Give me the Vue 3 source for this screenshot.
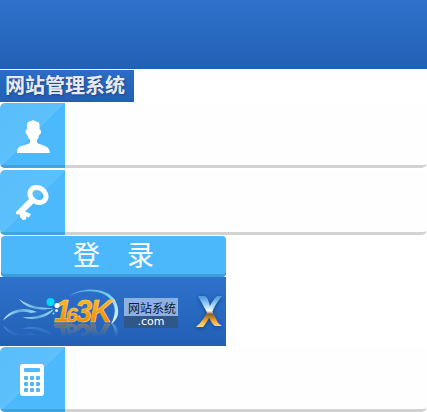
<script setup>
import { ref } from 'vue'

const username = ref('')
const password = ref('')
const code = ref('')
const dots = [0, 1, 2].flatMap((r) => [0, 1, 2].map((c) => ({ x: 24 + c * 6, y: 29 + r * 6 })))
</script>

<template>
  <div class="page">
    <header class="banner"></header>
    <form class="login" @submit.prevent>
      <h1 class="title">网站管理系统</h1>

      <div class="field">
        <label class="tile" for="username" aria-label="用户名">
          <svg viewBox="0 0 65 65" aria-hidden="true">
            <path fill="#fff" d="M28 19L31 18L33 17L36 18.500L39 19.500Q40 22 39.500 26Q41.500 27 41 30L39 32.500Q38.500 35.500 37 37V39.500Q38 41 41 41.500L46 43.500Q49.500 45 50 50H17Q17 45 20 43.500L26 41.500Q29.500 41 30 39.500V37Q28 35 27.500 32.500Q25 30.500 25.500 27.500L27 26Q26 22 28 19Z" />
          </svg>
        </label>
        <input id="username" v-model="username" class="entry" type="text" autocomplete="username" />
      </div>

      <div class="field">
        <label class="tile" for="password" aria-label="密码">
          <svg viewBox="0 0 65 65" aria-hidden="true">
            <ellipse cx="38" cy="25" rx="8.500" ry="7" transform="rotate(35 38 25)" fill="none" stroke="#fff" stroke-width="5" />
            <path fill="#fff" d="M29 29L34 33L25 41.500L31 44L29 47.500L26.500 46.500L26 49.500L23 50L20 47V44.500L16 44V42Z" />
          </svg>
        </label>
        <input id="password" v-model="password" class="entry" type="password" autocomplete="current-password" />
      </div>

      <button class="submit" type="submit">登　录</button>

      <div class="brand">
        <svg class="logo" viewBox="0 0 226 69" aria-label="163K 网站系统 .com">
          <defs>
            <linearGradient id="wing" x1="0" y1="0" x2="1" y2="0">
              <stop offset="0" stop-color="#c5e6fa" />
              <stop offset="0.5" stop-color="#5eaee0" />
              <stop offset="1" stop-color="#a5dff2" />
            </linearGradient>
            <linearGradient id="arc" x1="0" y1="0" x2="1" y2="1">
              <stop offset="0" stop-color="#4fa7d8" />
              <stop offset="0.5" stop-color="#77d2e5" />
              <stop offset="1" stop-color="#e3f8ff" />
            </linearGradient>
            <linearGradient id="gold" x1="0" y1="0" x2="0" y2="1">
              <stop offset="0.2" stop-color="#ffb41f" />
              <stop offset="0.8" stop-color="#f28c00" />
            </linearGradient>
            <linearGradient id="metal" gradientUnits="userSpaceOnUse" x1="0" y1="18" x2="0" y2="51">
              <stop offset="0" stop-color="#3f8fd9" />
              <stop offset="0.25" stop-color="#8cc8f5" />
              <stop offset="0.48" stop-color="#f5faff" />
              <stop offset="0.58" stop-color="#8a602f" />
              <stop offset="0.78" stop-color="#f5a828" />
              <stop offset="1" stop-color="#ffe6a8" />
            </linearGradient>
            <linearGradient id="fade" gradientUnits="userSpaceOnUse" x1="0" y1="46" x2="0" y2="60">
              <stop offset="0" stop-color="#fff" stop-opacity="0.4" />
              <stop offset="1" stop-color="#fff" stop-opacity="0" />
            </linearGradient>
            <mask id="mirror">
              <rect x="0" y="46" width="124" height="14" fill="url(#fade)" />
            </mask>
            <filter id="shade" x="-30%" y="-30%" width="160%" height="160%">
              <feDropShadow dx="0" dy="1" stdDeviation="2" flood-color="#12366d" flood-opacity="0.7" />
            </filter>
            <g id="mark">
              <g fill="url(#wing)">
                <path d="M3 43.500C9 32 24 29 37 35L31 36C20 32.500 11 37 3 43.500Z" />
                <path d="M19 22C29 29 40 31 53 31C41 34.500 26 32 19 22Z" />
                <path d="M22 40C35 41 43 38 54 32C47 42 32 44 22 40Z" />
              </g>
              <path d="M69 19C84 9 107 11 115 23C121 34 118 43 111 47C116 37 116 30 111 23C104 14 87 11 69 19Z" fill="url(#arc)" />
              <g class="digits" fill="url(#gold)" stroke="#ffd07a" stroke-width="0.500">
                <text x="54" y="45" font-size="31">1</text>
                <text x="66" y="45" font-size="21">6</text>
                <text x="75" y="45" font-size="31">3</text>
                <text x="90" y="45" font-size="31">K</text>
              </g>
            </g>
          </defs>
          <use href="#mark" />
          <g mask="url(#mirror)">
            <use href="#mark" transform="translate(0 92) scale(1 -1)" aria-hidden="true" />
          </g>
          <circle cx="50.500" cy="25" r="4" fill="#00d9ff" />
          <circle cx="57" cy="28.500" r="2.500" fill="#fff" />
          <circle cx="56.500" cy="33.500" r="1.500" fill="#d9f3ff" />
          <circle cx="53.500" cy="36.500" r="1" fill="#9fdcff" />
          <rect x="124" y="21" width="54" height="18" fill="#8eb1e3" />
          <rect x="124" y="39" width="54" height="12" fill="#305789" />
          <text class="site" x="152" y="36" text-anchor="middle">网站系统</text>
          <text class="domain" x="151" y="48" text-anchor="middle">.com</text>
          <g filter="url(#shade)" fill="url(#metal)">
            <path d="M198 19H205Q208 20 210 30L218 46L222 49H215Q211 46 208 37Z" />
            <path d="M217 19H222Q215 27 212 35Q207 45 203 50H196Q205 42 208 33Q212 24 217 19Z" />
          </g>
        </svg>
      </div>

      <div class="field">
        <label class="tile" for="code" aria-label="验证码">
          <svg viewBox="0 0 65 65" aria-hidden="true">
            <rect x="20" y="17" width="24" height="32" rx="3" fill="#fff" />
            <rect x="24" y="21" width="16" height="4" rx="1" fill="#55bafb" />
            <rect v-for="(dot, i) in dots" :key="i" :x="dot.x" :y="dot.y" width="4" height="4" rx="1" fill="#50b8fa" />
          </svg>
        </label>
        <input id="code" v-model="code" class="entry" type="text" autocomplete="off" />
      </div>
    </form>
  </div>
</template>

<style>
body {
  margin: 0;
  background: #fff;
}
</style>

<style scoped>
.page {
  font-family: "Liberation Sans", "Noto Sans CJK SC", sans-serif;
}

.banner {
  height: 69px;
  margin-bottom: 1px;
  background: linear-gradient(#2f72cc, #2160b5);
}

.login {
  display: flex;
  flex-direction: column;
  align-items: flex-start;
}

.title {
  box-sizing: border-box;
  height: 32px;
  margin: 0 0 1px;
  padding: 0 9px 0 5px;
  background: linear-gradient(#2b6cc5, #2160b5);
  color: #ebe9f0;
  font-size: 20px;
  font-weight: 700;
  line-height: 33px;
  text-shadow: 1px 1px 2px #1b4685;
}

.field {
  display: flex;
  box-sizing: border-box;
  width: 100%;
  height: 65px;
  margin-bottom: 2px;
  border-radius: 5px;
  overflow: hidden;
}

.field:last-child {
  margin: 1px 0 0;
}

.tile {
  flex: none;
  box-sizing: border-box;
  width: 65px;
  background: linear-gradient(135deg, #59befc 0%, #5cc0fb 50%, #4bb9fb 50%);
  box-shadow: inset 0 -3px #41a3dc;
}

.tile svg {
  display: block;
  width: 65px;
  height: 65px;
}

.entry {
  flex: 1;
  min-width: 0;
  box-sizing: border-box;
  padding: 0 12px;
  border: 0;
  border-bottom: 3px solid #d2d2d2;
  border-radius: 0 5px 5px 0;
  outline: 0;
  background: #fefefe;
  font-size: 18px;
}

.submit {
  width: 225px;
  height: 41px;
  margin: -1px 0 0 1px;
  padding: 0 0 1px;
  border: 0;
  border-radius: 4px;
  background: #4ab8fb;
  box-shadow: inset 0 -3px #3c9fdc;
  color: #fff;
  font-family: inherit;
  font-size: 27px;
  line-height: 38px;
}

.brand {
  width: 226px;
  background: linear-gradient(#2f72cc, #2160b5);
}

.logo {
  display: block;
  width: 226px;
  height: 69px;
}

.digits {
  font-family: "Liberation Sans", sans-serif;
  font-style: italic;
  font-weight: 700;
}

.site {
  fill: #0b1a33;
  font-family: "Noto Sans CJK SC", sans-serif;
  font-size: 12px;
}

.domain {
  fill: #fff;
  font-family: "DejaVu Sans", sans-serif;
  font-size: 11px;
}
</style>
